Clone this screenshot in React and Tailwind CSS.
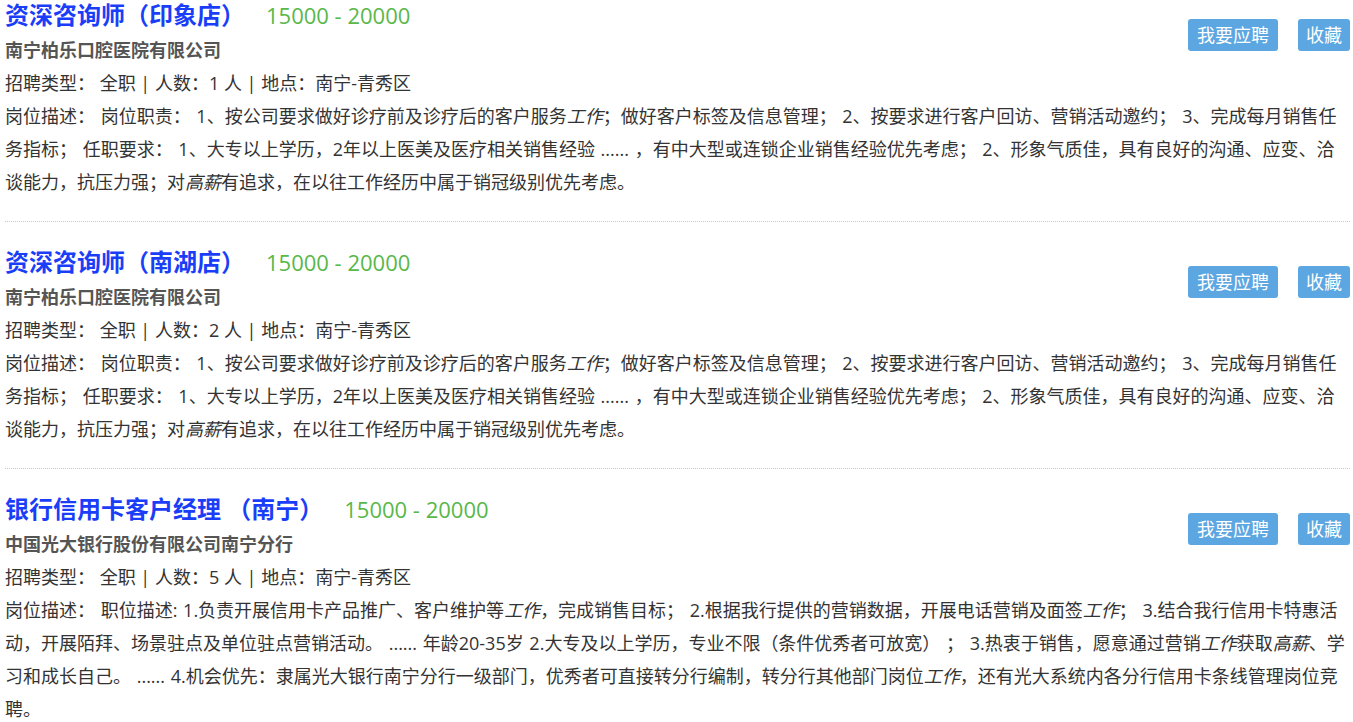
import React from "react";

const jobs = [
  {
    title: "资深咨询师（印象店）",
    salary: "15000 - 20000",
    company: "南宁柏乐口腔医院有限公司",
    count: "1",
    desc: (
      <>
        岗位职责： 1、按公司要求做好诊疗前及诊疗后的客户服务<em>工作</em>；做好客户标签及信息管理； 2、按要求进行客户回访、营销活动邀约； 3、完成每月销售任务指标； 任职要求： 1、大专以上学历，2年以上医美及医疗相关销售经验 ...... ，有中大型或连锁企业销售经验优先考虑； 2、形象气质佳，具有良好的沟通、应变、洽谈能力，抗压力强；对<em>高薪</em>有追求，在以往工作经历中属于销冠级别优先考虑。
      </>
    ),
  },
  {
    title: "资深咨询师（南湖店）",
    salary: "15000 - 20000",
    company: "南宁柏乐口腔医院有限公司",
    count: "2",
    desc: (
      <>
        岗位职责： 1、按公司要求做好诊疗前及诊疗后的客户服务<em>工作</em>；做好客户标签及信息管理； 2、按要求进行客户回访、营销活动邀约； 3、完成每月销售任务指标； 任职要求： 1、大专以上学历，2年以上医美及医疗相关销售经验 ...... ，有中大型或连锁企业销售经验优先考虑； 2、形象气质佳，具有良好的沟通、应变、洽谈能力，抗压力强；对<em>高薪</em>有追求，在以往工作经历中属于销冠级别优先考虑。
      </>
    ),
  },
  {
    title: "银行信用卡客户经理 （南宁）",
    salary: "15000 - 20000",
    company: "中国光大银行股份有限公司南宁分行",
    count: "5",
    desc: (
      <>
        职位描述: 1.负责开展信用卡产品推广、客户维护等<em>工作</em>，完成销售目标； 2.根据我行提供的营销数据，开展电话营销及面签<em>工作</em>； 3.结合我行信用卡特惠活动，开展陌拜、场景驻点及单位驻点营销活动。 ...... 年龄20-35岁 2.大专及以上学历，专业不限（条件优秀者可放宽） ； 3.热衷于销售，愿意通过营销<em>工作</em>获取<em>高薪</em>、学习和成长自己。 ...... 4.机会优先：隶属光大银行南宁分行一级部门，优秀者可直接转分行编制，转分行其他部门岗位<em>工作</em>，还有光大系统内各分行信用卡条线管理岗位竞聘。
      </>
    ),
  },
];

function JobItem({ job, first }) {
  return (
    <div
      className={
        (first ? "pt-0 " : "pt-[25px] ") +
        "pb-[22px] border-b border-dotted border-[#c8c8c8]"
      }
    >
      <div className="float-right mt-[19px] flex gap-[20px]">
        <button className="h-[32px] px-[9px] rounded-[3px] bg-[#5ca6e1] text-white text-[18px] leading-[32px]">
          我要应聘
        </button>
        <button className="h-[32px] px-[8px] rounded-[3px] bg-[#5ca6e1] text-white text-[18px] leading-[32px]">
          收藏
        </button>
      </div>
      <div className="flex items-center h-[30px] mb-[4px]">
        <span className="text-[24px] font-bold text-[#1a3ef8] leading-[30px]">{job.title}</span>
        <span className="ml-[21px] text-[22px] text-[#58b84a] leading-[30px]">{job.salary}</span>
      </div>
      <div className="text-[18px] font-bold text-[#555555] leading-[33px]">{job.company}</div>
      <div className="text-[18px] text-[#333333] leading-[33px]">
        招聘类型： 全职 | 人数：{job.count} 人 | 地点：南宁-青秀区
      </div>
      <div className="text-[18px] text-[#333333] leading-[33px] [word-spacing:1px]">
        岗位描述： {job.desc}
      </div>
    </div>
  );
}

export default function App() {
  return (
    <div
      className="w-[1353px] bg-white pl-[5px] pr-[3px]"
      style={{ fontFamily: '"Open Sans", "Noto Sans CJK SC", sans-serif' }}
    >
      {jobs.map((job, i) => (
        <JobItem key={i} job={job} first={i === 0} />
      ))}
    </div>
  );
}
